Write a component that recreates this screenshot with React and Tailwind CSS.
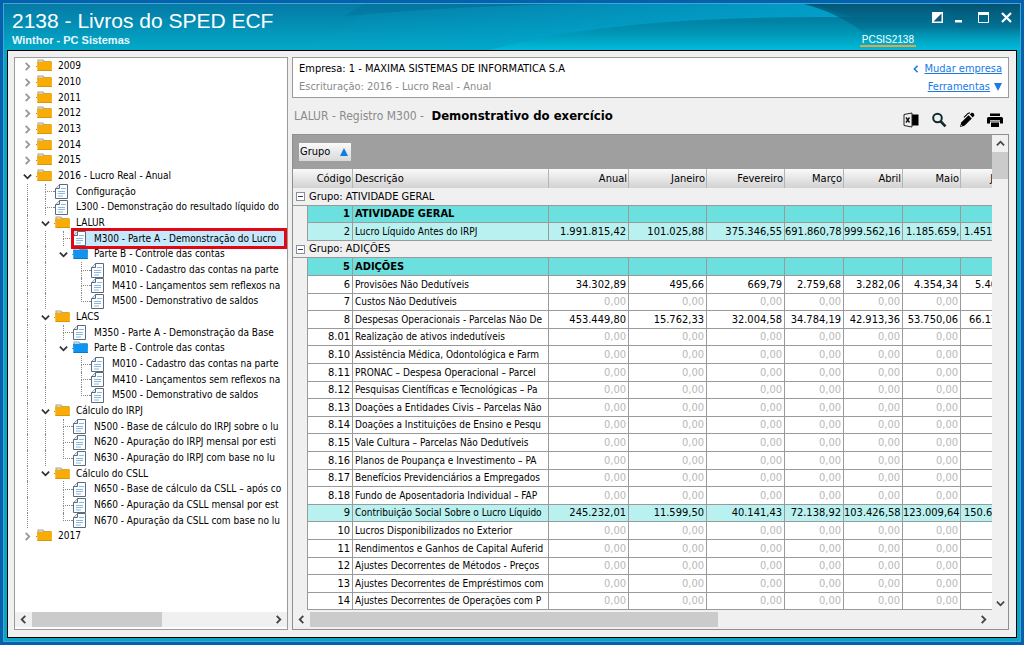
import React from "react";

const YEARS = ["2009", "2010", "2011", "2012", "2013", "2014", "2015"];

// kind: closed | open | blue | doc ; guides: whether each ancestor level draws its line
const TREE = [
  ...YEARS.map((y) => ({ level: 0, kind: "closed", text: y, guides: [] })),
  { level: 0, kind: "open", text: "2016 - Lucro Real - Anual", guides: [] },
  { level: 1, kind: "doc", text: "Configuração", guides: [1] },
  { level: 1, kind: "doc", text: "L300 - Demonstração do resultado líquido do", guides: [1] },
  { level: 1, kind: "open", text: "LALUR", guides: [1] },
  { level: 2, kind: "doc", text: "M300 - Parte A - Demonstração do Lucro", guides: [1, 1], selected: true },
  { level: 2, kind: "blue", text: "Parte B - Controle das contas", guides: [1, 1] },
  { level: 3, kind: "doc", text: "M010 - Cadastro das contas na parte", guides: [1, 1, 0] },
  { level: 3, kind: "doc", text: "M410 - Lançamentos sem reflexos na", guides: [1, 1, 0] },
  { level: 3, kind: "doc", text: "M500 - Demonstrativo de saldos", guides: [1, 1, 0], last: true },
  { level: 1, kind: "open", text: "LACS", guides: [1] },
  { level: 2, kind: "doc", text: "M350 - Parte A - Demonstração da Base", guides: [1, 1] },
  { level: 2, kind: "blue", text: "Parte B - Controle das contas", guides: [1, 1] },
  { level: 3, kind: "doc", text: "M010 - Cadastro das contas na parte", guides: [1, 1, 0] },
  { level: 3, kind: "doc", text: "M410 - Lançamentos sem reflexos na", guides: [1, 1, 0] },
  { level: 3, kind: "doc", text: "M500 - Demonstrativo de saldos", guides: [1, 1, 0], last: true },
  { level: 1, kind: "open", text: "Cálculo do IRPJ", guides: [1] },
  { level: 2, kind: "doc", text: "N500 - Base de cálculo do IRPJ sobre o lu", guides: [1, 1] },
  { level: 2, kind: "doc", text: "N620 - Apuração do IRPJ mensal por esti", guides: [1, 1] },
  { level: 2, kind: "doc", text: "N630 - Apuração do IRPJ com base no lu", guides: [1, 1], last: true },
  { level: 1, kind: "open", text: "Cálculo do CSLL", guides: [1] },
  { level: 2, kind: "doc", text: "N650 - Base de cálculo da CSLL – após co", guides: [1, 0] },
  { level: 2, kind: "doc", text: "N660 - Apuração da CSLL mensal por est", guides: [1, 0] },
  { level: 2, kind: "doc", text: "N670 - Apuração da CSLL com base no lu", guides: [1, 0], last: true },
  { level: 0, kind: "closed", text: "2017", guides: [] },
];

const Z = ["0,00", "0,00", "0,00", "0,00", "0,00", "0,00", ""];
const ROWS = [
  { group: "Grupo: ATIVIDADE GERAL" },
  { code: "1", desc: "ATIVIDADE GERAL", tone: "head" },
  { code: "2", desc: "Lucro Líquido Antes do IRPJ", tone: "light", v: ["1.991.815,42", "101.025,88", "375.346,55", "691.860,78", "999.562,16", "1.185.659,", "1.451"] },
  { group: "Grupo: ADIÇÕES" },
  { code: "5", desc: "ADIÇÕES", tone: "head" },
  { code: "6", desc: "Provisões Não Dedutíveis", v: ["34.302,89", "495,66", "669,79", "2.759,68", "3.282,06", "4.354,34", "5.40"] },
  { code: "7", desc: "Custos Não Dedutíveis", v: Z },
  { code: "8", desc: "Despesas Operacionais - Parcelas Não De", v: ["453.449,80", "15.762,33", "32.004,58", "34.784,19", "42.913,36", "53.750,06", "66.17"] },
  { code: "8.01", desc: "Realização de ativos indedutíveis", v: Z },
  { code: "8.10", desc: "Assistência Médica, Odontológica e Farm", v: Z },
  { code: "8.11", desc: "PRONAC – Despesa Operacional – Parcel", v: Z },
  { code: "8.12", desc: "Pesquisas Científicas e Tecnológicas – Pa", v: Z },
  { code: "8.13", desc: "Doações a Entidades Civis – Parcelas Não", v: Z },
  { code: "8.14", desc: "Doações a Instituições de Ensino e Pesqu", v: Z },
  { code: "8.15", desc: "Vale Cultura – Parcelas Não Dedutíveis", v: Z },
  { code: "8.16", desc: "Planos de Poupança e Investimento – PA", v: Z },
  { code: "8.17", desc: "Benefícios Previdenciários a Empregados", v: Z },
  { code: "8.18", desc: "Fundo de Aposentadoria Individual – FAP", v: Z },
  { code: "9", desc: "Contribuição Social Sobre o Lucro Líquido", tone: "light", v: ["245.232,01", "11.599,50", "40.141,43", "72.138,92", "103.426,58", "123.009,64", "150.6"] },
  { code: "10", desc: "Lucros Disponibilizados no Exterior", v: Z },
  { code: "11", desc: "Rendimentos e Ganhos de Capital Auferid", v: Z },
  { code: "12", desc: "Ajustes Decorrentes de Métodos - Preços", v: Z },
  { code: "13", desc: "Ajustes Decorrentes de Empréstimos com", v: Z },
  { code: "14", desc: "Ajustes Decorrentes de Operações com P", v: Z },
];

const MONTHS = ["Anual", "Janeiro", "Fevereiro", "Março", "Abril", "Maio", "Junho"];

function Chevron({ dir, className }) {
  const d = {
    right: "M3 1 L7 5 L3 9",
    left: "M7 1 L3 5 L7 9",
    down: "M1 3 L5 7 L9 3",
    up: "M1 7 L5 3 L9 7",
  }[dir];
  return (
    <svg viewBox="0 0 10 10" className={className} fill="none" stroke="currentColor" strokeWidth="2">
      <path d={d} />
    </svg>
  );
}

function Folder({ blue }) {
  return (
    <svg viewBox="0 0 15 12" className="mb-0.5 h-3 w-[15px] shrink-0">
      <path d="M0.5 3.5 V0.5 H6 L7.5 2 H14 V3.5 Z" fill={blue ? "#7fa9cf" : "#aaa08a"} />
      <path d="M1.5 1.5 H5.5 L6.5 2.6 H1.5 Z" fill="#f4f1e4" />
      <path d="M0 3 H6.5 L7.5 2.4 H15 L14.8 12 H0.4 Z" fill={blue ? "#1193f0" : "#f8ac08"} />
      <path d="M0.5 11.5 H14.8" stroke={blue ? "#0b78cc" : "#dd9406"} />
    </svg>
  );
}

function Doc() {
  return (
    <svg viewBox="0 0 13 15" className="h-[15px] w-[13px] shrink-0">
      <path d="M4.5 0.5 H12.5 V14.5 H0.5 V4.5 Z" fill="#fdfeff" stroke="#5d6b78" />
      <path d="M4.5 0.5 V4.5 H0.5" fill="#dfe9f1" stroke="#5d6b78" />
      <path d="M6 4.5 H11 M3 7.5 H10 M3 9.5 H10 M3 12 H8" stroke="#8ab8e0" />
    </svg>
  );
}

function Guide({ on }) {
  return (
    <span className="flex w-[18px] shrink-0 self-stretch">
      <span className="w-[9px]" />
      {on ? <span className="w-[9px] border-l border-dotted border-[#888]" /> : null}
    </span>
  );
}

function Branch({ last }) {
  return (
    <span className="flex w-[18px] shrink-0 self-stretch">
      <span className="w-[9px]" />
      <span className="flex w-[9px] flex-col">
        <span className="flex-1 border-b border-l border-dotted border-[#888]" />
        <span className={last ? "flex-1" : "flex-1 border-l border-dotted border-[#888]"} />
      </span>
    </span>
  );
}

function TreeRow({ item }) {
  const isDoc = item.kind === "doc";
  return (
    <li className="flex h-4 items-center nth-[3n]:h-[15px]">
      {item.guides.map((g, i) => (
        <Guide key={i} on={g} />
      ))}
      {isDoc ? (
        <Branch last={item.last} />
      ) : (
        <button
          type="button"
          aria-label={item.kind === "closed" ? `Expandir ${item.text}` : `Recolher ${item.text}`}
          className="flex w-[18px] shrink-0 items-center justify-center"
        >
          {item.kind === "closed" ? (
            <Chevron dir="right" className="size-[9px] text-[#999]" />
          ) : (
            <Chevron dir="down" className="size-[9px] text-[#333]" />
          )}
        </button>
      )}
      <a
        href="#registro"
        className={
          item.selected
            ? "relative flex flex-1 items-center self-stretch bg-[#c5e8fd] whitespace-nowrap"
            : "flex flex-1 items-center self-stretch whitespace-nowrap"
        }
      >
        <span className="flex w-[22px] shrink-0 items-center">
          <span className="w-px border-t border-dotted border-[#888]" />
          {isDoc ? <Doc /> : <Folder blue={item.kind === "blue"} />}
        </span>
        <span>{item.text}</span>
        {item.selected ? (
          <span className="absolute -inset-y-[3px] right-0 -left-px border-[3px] border-[#e30613]" />
        ) : null}
      </a>
    </li>
  );
}

function HeaderArt() {
  return (
    <svg className="absolute inset-0 size-full" viewBox="0 0 1016 46" preserveAspectRatio="none" aria-hidden="true">
      <defs>
        <linearGradient id="swoosh" x1="0" y1="0" x2="0" y2="1">
          <stop offset="0" stopColor="#007a9c" stopOpacity="0.9" />
          <stop offset="0.45" stopColor="#0093b3" stopOpacity="0.85" />
          <stop offset="1" stopColor="#00bddb" stopOpacity="0.95" />
        </linearGradient>
        <linearGradient id="wedge" x1="0" y1="0" x2="0" y2="1">
          <stop offset="0" stopColor="#02506f" stopOpacity="0.85" />
          <stop offset="0.6" stopColor="#04688a" stopOpacity="0.55" />
          <stop offset="1" stopColor="#06a9c8" stopOpacity="0" />
        </linearGradient>
        <linearGradient id="lit" x1="0" y1="0" x2="1" y2="0">
          <stop offset="0" stopColor="#00a6cf" stopOpacity="0" />
          <stop offset="1" stopColor="#00a6cf" stopOpacity="0.8" />
        </linearGradient>
      </defs>
      <path d="M360 10 Q480 0 620 0 H810 L850 14 Q640 14 486 46 H300 Z" fill="url(#lit)" />
      <path d="M360 0 H560 Q460 2 340 12 Z" fill="#00628c" opacity="0.25" />
      <path d="M486 46 Q600 13 820 13 H1016 V46 Z" fill="url(#swoosh)" />
      <path d="M800 0 Q845 12 872 40 H1016 V0 Z" fill="url(#wedge)" />
      <path d="M932 0 Q952 12 960 38 H1016 V0 Z" fill="url(#wedge)" opacity="0.6" />
    </svg>
  );
}

function TableRow({ row, short }) {
  const h = short ? "h-[17px]" : "h-[18px]";
  if (row.group) {
    return (
      <tr className={h}>
        <td colSpan={10} className="border-b border-[#9a9a9a] bg-[#f0f0f0] p-0 text-[11px]">
          <span className="flex items-center gap-1 pl-[3px]">
            <button
              type="button"
              aria-label={`Recolher ${row.group}`}
              className="flex size-[9px] items-center justify-center border border-[#8a8fa0] bg-white"
            >
              <span className="h-px w-[5px] bg-[#333a66]" />
            </button>
            {row.group}
          </span>
        </td>
      </tr>
    );
  }
  const tone = row.tone === "head" ? "bg-[#6cdfdf]" : row.tone === "light" ? "bg-[#b9f1f0]" : "bg-white";
  const bold = row.tone === "head" ? "font-bold text-[11px]" : "";
  const cell = `${tone} border-r border-b border-[#9a9a9a] p-0 overflow-hidden`;
  const side = (v, i) => {
    if (i === 5 && v.endsWith(",")) return "pl-[3px] text-left";
    if (i === 6) return v === "5.40" ? "pl-3.5 text-left" : v === "66.17" ? "pl-2 text-left" : "pl-[3px] text-left";
    return "pr-0.5 text-right";
  };
  return (
    <tr className={h}>
      <td className="border-r border-[#9a9a9a] bg-[#f0f0f0] p-0" />
      <td className={`${cell} ${bold} pr-0.5 text-right text-[11px]`}>{row.code}</td>
      <td className={`${cell} ${bold} pl-0.5`}>{row.desc}</td>
      {MONTHS.map((m, i) => {
        const v = row.v ? row.v[i] : "";
        const ink = v === "0,00" ? "text-[#b8b8b8]" : "text-black";
        return (
          <td key={m} className={`${cell} ${side(v, i)} ${ink} text-[11px]`}>
            {v}
          </td>
        );
      })}
    </tr>
  );
}

export default function App() {
  return (
    <div className="flex h-screen bg-[#0661ac] p-[3px] font-['DejaVu_Sans_Condensed','DejaVu_Sans',sans-serif] text-[10px] leading-[14px] text-black">
      <div className="flex min-w-0 flex-1 flex-col border border-[#3da8d4] bg-[#0aa4c4]">
        <header className="relative flex h-[46px] shrink-0 items-start justify-between bg-linear-to-b from-[#057aa5] to-[#03a9c8] pr-2 pl-2 font-['Liberation_Sans',sans-serif] text-white">
          <HeaderArt />
          <div className="relative pt-1">
            <h1 className="text-[21px] leading-[26px]">2138 - Livros do SPED ECF</h1>
            <p className="text-[11px] leading-[13px] font-bold text-[#e4f8ff]">Winthor - PC Sistemas</p>
          </div>
          <div className="relative flex flex-col items-end gap-[11px] pt-2">
            <div className="flex items-center gap-3">
              <button type="button" aria-label="Alternar painel">
                <svg viewBox="0 0 11 11" className="size-[11px]">
                  <path d="M0 0 H11 V11 H0 Z" fill="#fff" />
                  <path d="M9.5 1.5 V9.5 H1.5 Z" fill="#0b5877" />
                </svg>
              </button>
              <button type="button" aria-label="Minimizar" className="pr-[3px]">
                <svg viewBox="0 0 8 11" className="h-[11px] w-2">
                  <path d="M0 8 H7 V10.5 H0 Z" fill="#fff" />
                </svg>
              </button>
              <button type="button" aria-label="Maximizar">
                <svg viewBox="0 0 11 11" className="size-[11px]" fill="none" stroke="#fff">
                  <path d="M0.5 1 V10.5 H10.5 V1" />
                  <path d="M0 1.5 H11" strokeWidth="3" />
                </svg>
              </button>
              <button type="button" aria-label="Fechar">
                <svg viewBox="0 0 11 11" className="size-[11px]" stroke="#fff" strokeWidth="2.2">
                  <path d="M1 1 L10 10 M10 1 L1 10" />
                </svg>
              </button>
            </div>
            <div className="mr-24 border-b-2 border-[#eba33c] px-0.5 text-[10px] leading-[11px]">PCSIS2138</div>
          </div>
        </header>

        <main className="mx-[3px] mb-[3px] flex min-h-0 flex-1 gap-1 border border-black bg-[#f0f0f0] p-1.5 pr-[7px] pb-[7px]">
          <nav aria-label="Escriturações" className="flex w-[274px] shrink-0 flex-col border border-[#9b9b9b] bg-white">
            <ul className="min-h-0 flex-1 overflow-hidden pl-[3px]">
              {TREE.map((item, i) => (
                <TreeRow key={i} item={item} />
              ))}
            </ul>
            <div className="mb-0.5 flex h-[15px] items-stretch bg-[#f0f0f0] text-[#444]">
              <button type="button" aria-label="Rolar para a esquerda" className="flex w-[17px] items-center justify-center">
                <Chevron dir="left" className="size-[9px]" />
              </button>
              <div className="flex-1">
                <div className="h-full w-[130px] bg-[#cbcbcb]" />
              </div>
              <button type="button" aria-label="Rolar para a direita" className="flex w-[17px] items-center justify-center">
                <Chevron dir="right" className="size-[9px]" />
              </button>
            </div>
          </nav>

          <section className="flex min-w-0 flex-1 flex-col">
            <div className="flex h-[41px] shrink-0 justify-between border border-[#9b9b9b] bg-white py-0.5 pr-1.5 pl-1.5 text-[11px] leading-[18px]">
              <div>
                <p>Empresa: 1 - MAXIMA SISTEMAS DE INFORMATICA S.A</p>
                <p className="text-[#8a8a8a]">Escrituração: 2016 - Lucro Real - Anual</p>
              </div>
              <div className="flex flex-col items-end text-[#1a7ae6]">
                <div className="flex items-center gap-1">
                  <Chevron dir="left" className="size-2" />
                  <a href="#empresa" className="underline">
                    Mudar empresa
                  </a>
                </div>
                <div className="flex items-center gap-1">
                  <a href="#ferramentas" className="underline">
                    Ferramentas
                  </a>
                  <svg viewBox="0 0 8 8" className="size-2" fill="currentColor">
                    <path d="M0 0 H8 L4 8 Z" />
                  </svg>
                </div>
              </div>
            </div>

            <div className="flex h-9 shrink-0 items-center justify-between pr-1.5 pl-0.5">
              <h2 className="text-[12px] leading-[16px] text-[#8a8a8a]">
                LALUR - Registro M300 - <strong className="ml-1 text-[13px] text-black">Demonstrativo do exercício</strong>
              </h2>
              <div className="flex items-center gap-3 pt-2">
                <button type="button" aria-label="Exportar para Excel">
                  <svg viewBox="0 0 16 16" className="size-4">
                    <path d="M8 2.5 H15.5 V13.5 H8 Z" fill="#000" />
                    <path d="M1 2.5 L9 1 V15 L1 13.5 Z" fill="#f0f0f0" stroke="#222" />
                    <path d="M3 5.5 L6.5 10.5 M6.5 5.5 L3 10.5" stroke="#111" strokeWidth="1.4" />
                  </svg>
                </button>
                <button type="button" aria-label="Pesquisar">
                  <svg viewBox="0 0 16 16" className="size-4" fill="none" stroke="#10292f">
                    <circle cx="6.5" cy="6" r="4.3" strokeWidth="2" />
                    <path d="M9.8 9.5 L14.5 14.3" strokeWidth="2.6" />
                  </svg>
                </button>
                <button type="button" aria-label="Editar">
                  <svg viewBox="0 0 16 16" className="size-4">
                    <path d="M1 15 L2.2 10.5 L9.5 3.2 L12.8 6.5 L5.5 13.8 Z" fill="#000" />
                    <path d="M10.8 2.4 L12.6 0.8 Q14.4 0.5 15.2 2.2 L15.3 3.6 L13.8 5.4 Z" fill="#000" />
                    <path d="M5 5.4 L9 1.4 L11 0.8" fill="none" stroke="#000" strokeWidth="1.1" />
                    <path d="M1.8 14.2 L3.2 13.8 L2.2 12.8 Z" fill="#f0f0f0" />
                  </svg>
                </button>
                <button type="button" aria-label="Imprimir">
                  <svg viewBox="0 0 16 16" className="size-4">
                    <path d="M3 1.5 H13 V4 H3 Z" fill="#000" />
                    <path d="M1.5 5 H14.5 Q16 5 16 6.5 V11.5 H13 V9.5 H3 V11.5 H0 V6.5 Q0 5 1.5 5 Z" fill="#000" />
                    <path d="M4 10.5 H12 V15 H4 Z" fill="#000" />
                    <path d="M3 8.7 H13" stroke="#f0f0f0" strokeWidth="0.9" />
                  </svg>
                </button>
              </div>
            </div>

            <div className="flex min-h-0 flex-1 flex-col border border-[#8f8f8f] bg-[#f0f0f0]">
              <div className="flex min-h-0 flex-1">
                <div className="flex min-w-0 flex-1 flex-col overflow-hidden">
                  <div className="flex h-[34px] shrink-0 items-center bg-[#9f9f9f] pl-1.5">
                    <button
                      type="button"
                      className="flex h-[18px] w-[52px] items-center justify-between bg-linear-to-b from-[#fafafa] to-[#d9d9d9] pr-[3px] pl-px text-[11px]"
                    >
                      Grupo
                      <svg viewBox="0 0 8 8" className="size-2" fill="#0e7fdc">
                        <path d="M0 8 H8 L4 0 Z" />
                      </svg>
                    </button>
                  </div>
                  <table className="w-[727px] table-fixed border-separate border-spacing-0 whitespace-nowrap">
                    <colgroup>
                      <col className="w-[15px]" />
                      <col className="w-[45px]" />
                      <col className="w-[196px]" />
                      <col className="w-20" />
                      <col className="w-[78px]" />
                      <col className="w-[78px]" />
                      <col className="w-[59px]" />
                      <col className="w-[59px]" />
                      <col className="w-[58px]" />
                      <col className="w-[59px]" />
                    </colgroup>
                    <thead>
                      <tr className="h-[19px] bg-linear-to-b from-[#fafafa] to-[#d2d2d2] text-[11px]">
                        <th scope="col" colSpan={2} className="border-r border-[#b5b5b5] p-0 pr-px text-right font-normal">
                          Código
                        </th>
                        <th scope="col" className="border-r border-[#b5b5b5] p-0 pl-0.5 text-left font-normal">
                          Descrição
                        </th>
                        {MONTHS.map((m) => (
                          <th key={m} scope="col" className="border-r border-[#b5b5b5] p-0 pr-px text-right font-normal">
                            {m}
                          </th>
                        ))}
                      </tr>
                    </thead>
                    <tbody>
                      {ROWS.map((row, i) => (
                        <TableRow key={i} row={row} short={i % 5 === 1 || i % 5 === 3} />
                      ))}
                    </tbody>
                  </table>
                </div>
                <div className="flex w-4 shrink-0 flex-col bg-[#f0f0f0] text-[#444]">
                  <button type="button" aria-label="Rolar para cima" className="flex h-[17px] items-center justify-center">
                    <Chevron dir="up" className="size-[9px]" />
                  </button>
                  <div className="flex-1">
                    <div className="h-[27px] bg-[#cbcbcb]" />
                  </div>
                  <button type="button" aria-label="Rolar para baixo" className="flex h-[17px] items-center justify-center">
                    <Chevron dir="down" className="size-[9px]" />
                  </button>
                </div>
              </div>
              <div className="mb-0.5 flex h-[15px] shrink-0 items-stretch pr-4 text-[#444]">
                <button type="button" aria-label="Rolar para a esquerda" className="flex w-[17px] items-center justify-center">
                  <Chevron dir="left" className="size-[9px]" />
                </button>
                <div className="flex-1">
                  <div className="h-full w-[408px] bg-[#cbcbcb]" />
                </div>
                <button type="button" aria-label="Rolar para a direita" className="flex w-[17px] items-center justify-center">
                  <Chevron dir="right" className="size-[9px]" />
                </button>
              </div>
            </div>
          </section>
        </main>
      </div>
    </div>
  );
}
